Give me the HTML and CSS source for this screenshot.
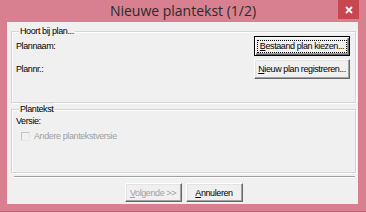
FILE: index.html
```html
<!DOCTYPE html>
<html lang="nl">
<head>
    <meta charset="UTF-8">
    <title>Nieuwe plantekst (1/2)</title>
    <link rel="stylesheet" href="styles.css">
</head>
<body>
    <div class="window">
        <div class="titlebar">
            <span class="title-spacer"></span>
            <span class="title">Nieuwe plantekst (1/2)</span>
            <span class="close-btn">
                <svg width="8" height="8" viewBox="0 0 8 8"><path d="M1 1 L7 7 M7 1 L1 7" stroke="#fff" stroke-width="1.8"/></svg>
            </span>
        </div>

        <div class="client">
            <div class="group group-plan">
                <span class="legend">Hoort bij plan...</span>
                <div class="row">
                    <span class="label">Plannaam:</span>
                    <button class="btn btn-wide btn-default"><span class="focus"><u>B</u>estaand plan kiezen...</span></button>
                </div>
                <div class="row">
                    <span class="label">Plannr.:</span>
                    <button class="btn btn-wide"><span><u>N</u>ieuw plan registreren...</span></button>
                </div>
            </div>

            <div class="group group-tekst">
                <span class="legend">Plantekst</span>
                <div class="label">Versie:</div>
                <div class="check disabled">
                    <span class="check-box"></span>
                    <span>Andere plantekstversie</span>
                </div>
            </div>

            <div class="separator"></div>

            <div class="actions">
                <button class="btn btn-small disabled"><span><u>V</u>olgende &gt;&gt;</span></button>
                <button class="btn btn-small"><span><u>A</u>nnuleren</span></button>
            </div>
        </div>
    </div>
</body>
</html>
```

FILE: styles.css
```css
* {
    margin: 0;
    padding: 0;
    box-sizing: border-box;
}

body {
    background: #d97f8f;
    font-family: 'Liberation Sans', Arial, sans-serif;
    font-size: 9px;
    letter-spacing: -0.4px;
    color: #000;
}

/* Window frame */
.window {
    width: 366px;
    height: 212px;
    background: #d8808f;
    border-bottom: 1px solid #b86676;
    display: flex;
    flex-direction: column;
}

.titlebar {
    height: 22px;
    display: flex;
    align-items: flex-start;
    padding: 0 7px;
}

.title-spacer {
    width: 21px;
}

.title {
    flex: 1;
    text-align: center;
    font-family: 'Open Sans', 'Liberation Sans', sans-serif;
    font-size: 14px;
    letter-spacing: 0;
    line-height: 22px;
    color: #2b2b2b;
}

.close-btn {
    width: 21px;
    height: 19px;
    background: #c6474f;
    display: flex;
    justify-content: center;
    align-items: center;
}

/* Client area */
.client {
    flex: 1;
    margin: 0 8px 7px 7px;
    background: #f0f0f0;
    padding: 9px 2px 0 4px;
}

.group {
    border: 1px solid #d5d5d5;
    box-shadow: inset 1px 1px #fff, 1px 1px #fff;
    padding: 0 5px 0 4px;
}

.legend {
    display: table;
    margin: -7px 0 0 3px;
    padding: 0 1px;
    line-height: 12px;
    background: #f0f0f0;
}

.group-plan {
    height: 72px;
}

.group-tekst {
    height: 64px;
    margin-top: 6px;
}

.row {
    display: flex;
    justify-content: space-between;
    align-items: center;
    height: 20px;
}

.group-plan .row:first-of-type {
    margin-top: -1px;
}

.row + .row {
    margin-top: 3px;
}

.label {
    line-height: 12px;
}

.check {
    display: flex;
    align-items: center;
    gap: 4px;
    margin: 3px 0 0 5px;
    line-height: 12px;
}

.check-box {
    width: 9px;
    height: 9px;
    border: 1px solid #c4c4c4;
    border-right-color: #e8e8e8;
    border-bottom-color: #e8e8e8;
}

.disabled {
    color: #a0a0a0;
}

.separator {
    margin: 3px 1px 0 3px;
    height: 2px;
    border-top: 1px solid #a0a0a0;
    border-bottom: 1px solid #fff;
}

.actions {
    display: flex;
    justify-content: center;
    gap: 4px;
    margin-top: 5px;
}

/* Classic 3D push buttons */
.btn {
    font: inherit;
    letter-spacing: inherit;
    color: #000;
    background: #f0f0f0;
    border: 1px solid;
    border-color: #fff #696969 #696969 #fff;
    box-shadow: inset -1px -1px #a0a0a0, inset 1px 1px #e3e3e3;
    height: 20px;
    line-height: 12px;
    white-space: nowrap;
    text-align: center;
}

.btn-wide {
    width: 96px;
}

.btn-small {
    width: 57px;
    height: 19px;
}

.btn.disabled {
    color: #a0a0a0;
}

.btn-default {
    border: 1px solid #000;
    box-shadow: inset 1px 1px #fff, inset -1px -1px #696969, inset -2px -2px #a0a0a0;
}

.focus {
    display: inline-block;
    border: 1px dotted #000;
    padding: 0 2px;
    line-height: 11px;
}
```
